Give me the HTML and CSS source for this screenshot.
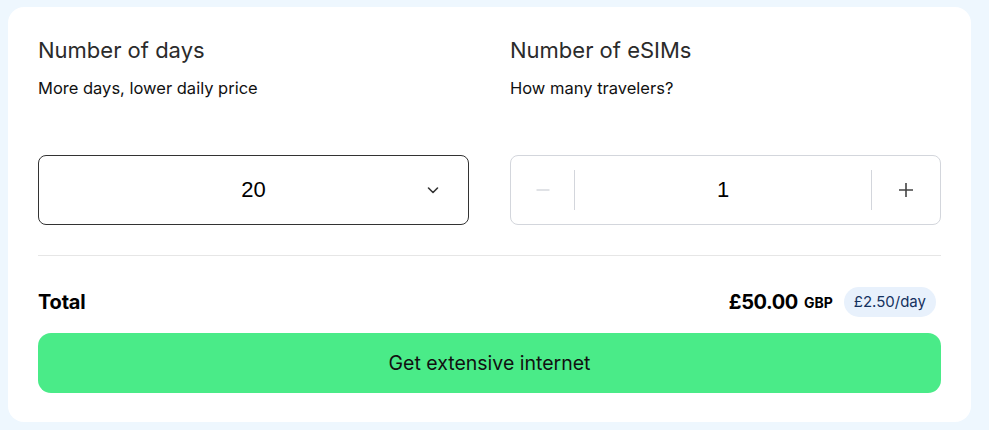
FILE: index.html
```html
<!DOCTYPE html>
<html lang="en">
  <head>
    <meta charset="UTF-8" />
    <meta name="viewport" content="width=device-width, initial-scale=1.0" />
    <title>eSIM plan</title>
    <link rel="stylesheet" href="styles.css">
  </head>
  <body>
    <div class="card">
      <div class="options">
        <div class="option">
          <h2>Number of days</h2>
          <p class="hint">More days, lower daily price</p>
          <div class="select-box">
            <span class="select-value">20</span>
            <svg class="chevron" width="16" height="16" viewBox="0 0 16 16">
              <path d="M3.5 6l4.5 4.5L12.5 6" fill="none" stroke="#333" stroke-width="1.6" stroke-linecap="round" stroke-linejoin="round" />
            </svg>
          </div>
        </div>
        <div class="option">
          <h2>Number of eSIMs</h2>
          <p class="hint">How many travelers?</p>
          <div class="stepper">
            <button type="button" class="step step-off">
              <svg width="16" height="16" viewBox="0 0 16 16">
                <path d="M1.5 8h13" stroke="#d3d6db" stroke-width="1.4" />
              </svg>
            </button>
            <span class="step-value">1</span>
            <button type="button" class="step">
              <svg width="18" height="18" viewBox="0 0 18 18">
                <path d="M2 9h14M9 2v14" stroke="#444" stroke-width="1.6" />
              </svg>
            </button>
          </div>
        </div>
      </div>

      <hr class="divider" />

      <div class="total-row">
        <span class="total-label">Total</span>
        <div class="price">
          <span class="amount">£50.00</span>
          <span class="currency">GBP</span>
          <span class="per-day">£2.50/day</span>
        </div>
      </div>

      <button type="button" class="cta">Get extensive internet</button>
    </div>
  </body>
</html>
```

FILE: styles.css
```css
body {
  font-family: Inter, "Open Sans", sans-serif;
  background-color: #eef7fe;
  margin: 0;
  padding: 7px 18px 8px 8px;
}
.card {
  background: #fff;
  border-radius: 16px;
  padding: 29px 30px 29px 30px;
}
.options {
  display: grid;
  grid-template-columns: 1fr 1fr;
  column-gap: 41px;
}
h2 {
  margin: 0;
  font-size: 22px;
  font-weight: 400;
  line-height: 28px;
  color: #2b2b2b;
}
.hint {
  margin: 14px 0 0;
  font-size: 16.5px;
  line-height: 20px;
  color: #111;
}
.select-box,
.stepper {
  margin-top: 57px;
  height: 70px;
  box-sizing: border-box;
  border-radius: 8px;
  display: flex;
  align-items: center;
}
.select-box {
  border: 1px solid #333;
  position: relative;
  justify-content: center;
}
.select-value,
.step-value {
  font-family: "Liberation Sans", Arial, sans-serif;
  font-size: 22px;
  color: #000;
}
.chevron {
  position: absolute;
  right: 27px;
  top: 26px;
}
.stepper {
  border: 1px solid #d3d6dc;
}
.step {
  width: 64px;
  height: 40px;
  background: none;
  border: none;
  padding: 0;
  display: flex;
  align-items: center;
  justify-content: center;
  cursor: pointer;
}
.step:first-child {
  border-right: 1px solid #d3d6dc;
}
.step:last-child {
  border-left: 1px solid #d3d6dc;
  width: 69px;
}
.step-off {
  cursor: default;
}
.step-value {
  flex: 1;
  text-align: center;
}
.divider {
  border: none;
  border-top: 1px solid #e6e6e6;
  margin: 30px 0 0;
}
.total-row {
  display: flex;
  justify-content: space-between;
  align-items: center;
  margin-top: 31px;
}
.total-label {
  font-size: 20px;
  font-weight: 700;
  color: #000;
  letter-spacing: -0.2px;
}
.price {
  display: flex;
  align-items: center;
  margin-right: 5px;
}
.amount {
  font-size: 20px;
  font-weight: 700;
  color: #000;
  letter-spacing: -0.4px;
}
.currency {
  font-size: 14px;
  font-weight: 700;
  margin-left: 6px;
  color: #000;
}
.per-day {
  margin-left: 11px;
  background: #e8f1fc;
  color: #15325f;
  font-size: 15px;
  line-height: 20px;
  padding: 5px 10px;
  border-radius: 15px;
}
.cta {
  display: block;
  width: 100%;
  margin-top: 16px;
  height: 60px;
  border: none;
  border-radius: 13px;
  background-color: #4aeb88;
  color: #111;
  font-family: Inter, "Open Sans", sans-serif;
  font-size: 19.5px;
  cursor: pointer;
}
```
